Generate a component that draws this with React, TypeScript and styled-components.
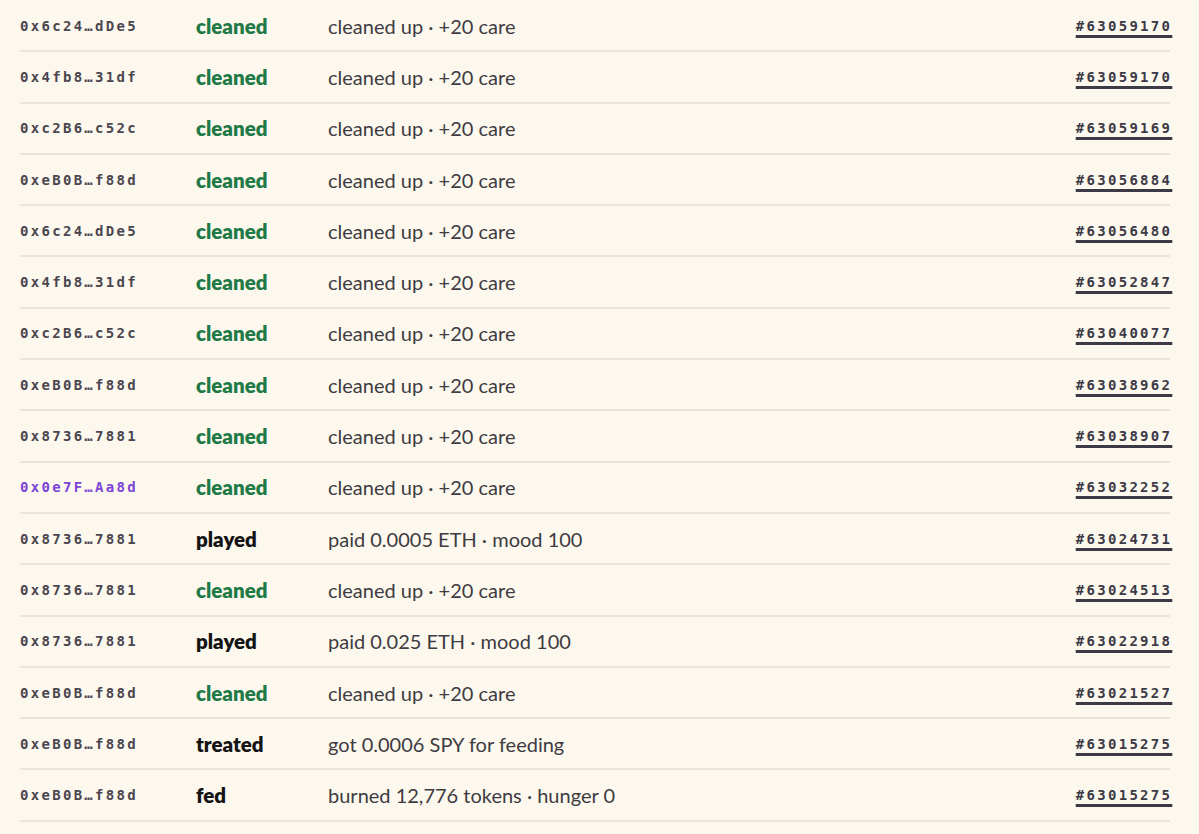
import React from "react";
import styled, { createGlobalStyle } from "styled-components";

const Global = createGlobalStyle`
  html, body { margin: 0; padding: 0; background: #fdf8ed; }
  body { font-family: "Lato", "Noto Sans", sans-serif; }
`;

type Kind = "cleaned" | "played" | "treated" | "fed";
type Row = { addr: string; you?: boolean; kind: Kind; desc: string; tx: string };

const rows: Row[] = [
  { addr: "0x6c24…dDe5", kind: "cleaned", desc: "cleaned up · +20 care", tx: "#63059170" },
  { addr: "0x4fb8…31df", kind: "cleaned", desc: "cleaned up · +20 care", tx: "#63059170" },
  { addr: "0xc2B6…c52c", kind: "cleaned", desc: "cleaned up · +20 care", tx: "#63059169" },
  { addr: "0xeB0B…f88d", kind: "cleaned", desc: "cleaned up · +20 care", tx: "#63056884" },
  { addr: "0x6c24…dDe5", kind: "cleaned", desc: "cleaned up · +20 care", tx: "#63056480" },
  { addr: "0x4fb8…31df", kind: "cleaned", desc: "cleaned up · +20 care", tx: "#63052847" },
  { addr: "0xc2B6…c52c", kind: "cleaned", desc: "cleaned up · +20 care", tx: "#63040077" },
  { addr: "0xeB0B…f88d", kind: "cleaned", desc: "cleaned up · +20 care", tx: "#63038962" },
  { addr: "0x8736…7881", kind: "cleaned", desc: "cleaned up · +20 care", tx: "#63038907" },
  { addr: "0x0e7F…Aa8d", you: true, kind: "cleaned", desc: "cleaned up · +20 care", tx: "#63032252" },
  { addr: "0x8736…7881", kind: "played", desc: "paid 0.0005 ETH · mood 100", tx: "#63024731" },
  { addr: "0x8736…7881", kind: "cleaned", desc: "cleaned up · +20 care", tx: "#63024513" },
  { addr: "0x8736…7881", kind: "played", desc: "paid 0.025 ETH · mood 100", tx: "#63022918" },
  { addr: "0xeB0B…f88d", kind: "cleaned", desc: "cleaned up · +20 care", tx: "#63021527" },
  { addr: "0xeB0B…f88d", kind: "treated", desc: "got 0.0006 SPY for feeding", tx: "#63015275" },
  { addr: "0xeB0B…f88d", kind: "fed", desc: "burned 12,776 tokens · hunger 0", tx: "#63015275" },
];

const Page = styled.div`
  padding: 1px 29px 0 20px;
`;

const List = styled.div`
  display: flex;
  flex-direction: column;
`;

const Item = styled.div`
  display: grid;
  grid-template-columns: 176px 132px 1fr auto;
  align-items: center;
  height: 49.3px;
  border-bottom: 2px solid #e9e5dc;
`;

const Addr = styled.span<{ $you?: boolean }>`
  font-family: "DejaVu Sans Mono", "Liberation Mono", monospace;
  font-weight: bold;
  font-size: 14px;
  letter-spacing: 2.3px;
  color: ${(p) => (p.$you ? "#7b45d6" : "#4a4650")};
`;

const Action = styled.span<{ $kind: Kind }>`
  font-family: "Lato", "Noto Sans", sans-serif;
  font-weight: 800;
  font-size: 20.5px;
  color: ${(p) => (p.$kind === "cleaned" ? "#1f7a47" : "#141414")};
`;

const Desc = styled.span`
  font-family: "Lato", "Noto Sans", sans-serif;
  font-size: 20px;
  color: #3e3b42;
`;

const Tx = styled.a`
  font-family: "DejaVu Sans Mono", "Liberation Mono", monospace;
  font-weight: bold;
  font-size: 14px;
  letter-spacing: 2.3px;
  margin-right: -2.3px;
  color: #3c3a47;
  text-decoration: underline;
  text-decoration-thickness: 2.5px;
  text-underline-offset: 4px;
`;

export default function App() {
  return (
    <>
      <Global />
      <Page>
        <List>
          {rows.map((r, i) => (
            <Item key={i}>
              <Addr $you={r.you}>{r.addr}</Addr>
              <Action $kind={r.kind}>{r.kind}</Action>
              <Desc>{r.desc}</Desc>
              <Tx href="#">{r.tx}</Tx>
            </Item>
          ))}
        </List>
      </Page>
    </>
  );
}
